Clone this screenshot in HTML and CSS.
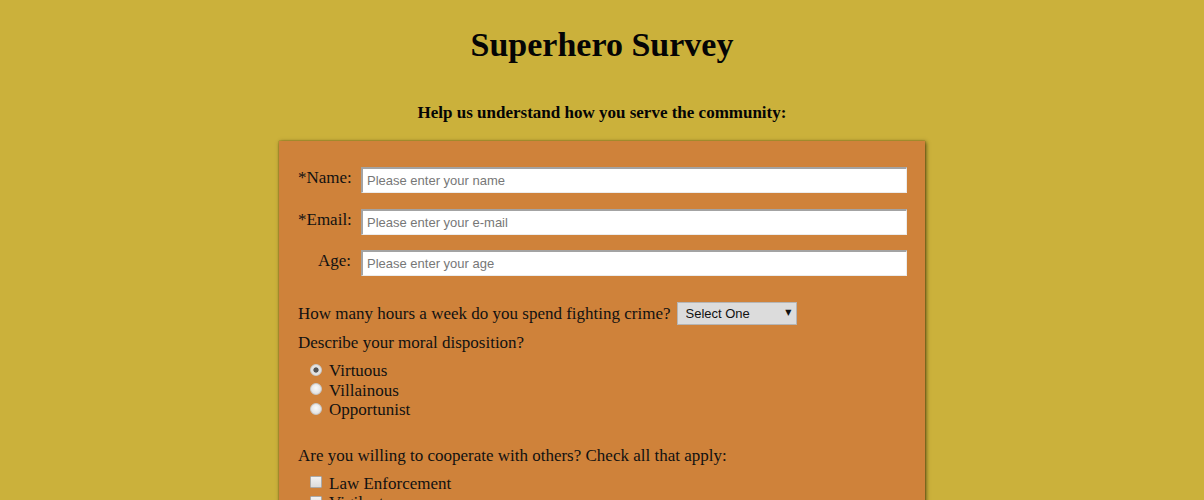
FILE: index.html
```html
<!DOCTYPE html>
<html lang="en">
<head>
<meta charset="utf-8">
<title>Superhero Survey</title>
<link rel="stylesheet" href="styles.css">
</head>
<body>
<h1 class="title">Superhero Survey</h1>
<p class="subtitle">Help us understand how you serve the community:</p>
<form class="survey">
  <div class="fields">
    <label class="field-label" for="name">*Name:</label>
    <input class="text-input" id="name" type="text" placeholder="Please enter your name">
    <label class="field-label" for="email">*Email:</label>
    <input class="text-input" id="email" type="email" placeholder="Please enter your e-mail">
    <label class="field-label" for="age">Age:</label>
    <input class="text-input" id="age" type="text" placeholder="Please enter your age">
  </div>
  <div class="q-hours">
    <span>How many hours a week do you spend fighting crime?</span>
    <span class="select-wrap">
      <select class="select">
        <option>Select One</option>
        <option>0-10</option>
        <option>10-20</option>
        <option>20+</option>
      </select>
      <span class="select-arrow">▼</span>
    </span>
  </div>
  <div class="question">Describe your moral disposition?</div>
  <div class="options">
    <label class="option"><input class="radio" type="radio" name="moral" checked> Virtuous</label>
    <label class="option"><input class="radio" type="radio" name="moral"> Villainous</label>
    <label class="option"><input class="radio" type="radio" name="moral"> Opportunist</label>
  </div>
  <div class="question q-coop">Are you willing to cooperate with others? Check all that apply:</div>
  <div class="options">
    <label class="option"><input class="check" type="checkbox"> Law Enforcement</label>
    <label class="option"><input class="check" type="checkbox"> Vigilantes</label>
    <label class="option"><input class="check" type="checkbox"> Other Superheroes</label>
  </div>
</form>
</body>
</html>
```
FILE: styles.css
```css
html, body {
  margin: 0;
  padding: 0;
}
body {
  background: #cbb13b;
  font-family: "Liberation Serif", "Times New Roman", serif;
  color: #111;
  padding-top: 25px;
}
.title {
  margin: 0;
  text-align: center;
  font-size: 34px;
  line-height: 40px;
  font-weight: bold;
  color: #050505;
}
.subtitle {
  margin: 37px 0 0;
  text-align: center;
  font-size: 17px;
  line-height: 22px;
  font-weight: bold;
  color: #050505;
}
.survey {
  width: 646px;
  box-sizing: border-box;
  margin: 17px auto 0;
  padding: 26px 18px 40px 19px;
  background: #cf823a;
  box-shadow: 0 0 1px rgba(60, 40, 0, 0.6), 1px 1px 4px rgba(40, 30, 0, 0.75);
  font-size: 17px;
}
.fields {
  display: grid;
  grid-template-columns: 53px 1fr;
  column-gap: 10px;
  row-gap: 15.5px;
  align-items: center;
}
.field-label {
  text-align: right;
  white-space: nowrap;
  line-height: 20px;
  position: relative;
  top: -2px;
}
.text-input {
  height: 26px;
  box-sizing: border-box;
  margin: 0;
  padding: 0 4px;
  background: #fff;
  border-top: 2px solid #a3a3a3;
  border-left: 2px solid #a3a3a3;
  border-right: 1px solid #ececec;
  border-bottom: 1px solid #ececec;
  font-family: "Liberation Sans", Arial, sans-serif;
  font-size: 13px;
  color: #222;
  outline: none;
}
.text-input::placeholder {
  color: #777;
}
.q-hours {
  display: flex;
  align-items: center;
  height: 23px;
  margin-top: 26px;
  line-height: 20px;
}
.select-wrap {
  position: relative;
  display: inline-block;
  margin-left: 6px;
}
.select {
  appearance: none;
  -webkit-appearance: none;
  width: 120px;
  height: 23px;
  margin: 0;
  padding: 0 20px 0 8px;
  background: #dcdcdc;
  border: 1px solid #b5b5b5;
  border-radius: 0;
  font-family: "Liberation Sans", Arial, sans-serif;
  font-size: 13px;
  color: #111;
  display: block;
}
.select-arrow {
  position: absolute;
  right: 5px;
  top: 5px;
  font-family: "DejaVu Sans", sans-serif;
  font-size: 8px;
  line-height: 12px;
  color: #111;
  pointer-events: none;
}
.question {
  margin-top: 8px;
  line-height: 20px;
}
.q-coop {
  margin-top: 26px;
}
.options {
  margin-top: 8px;
  padding-left: 12px;
  display: flex;
  flex-direction: column;
}
.option {
  line-height: 19.5px;
  display: flex;
  align-items: center;
  gap: 7px;
}
.radio {
  appearance: none;
  -webkit-appearance: none;
  width: 12px;
  height: 12px;
  margin: 0;
  border-radius: 50%;
  border: 1px solid #c8c8c8;
  background: radial-gradient(circle at 50% 40%, #fafafa 0%, #e2e2e2 70%, #d6d6d6 100%);
  box-sizing: border-box;
  position: relative;
  top: -1px;
}
.radio:checked {
  background: radial-gradient(circle, #555 0, #555 2.2px, #e0e0e0 3px, #ececec 100%);
}
.check {
  appearance: none;
  -webkit-appearance: none;
  width: 12px;
  height: 12px;
  margin: 0;
  border: 1px solid #aaa;
  border-radius: 1px;
  background: linear-gradient(#f2f2f2, #dcdcdc);
  box-sizing: border-box;
  position: relative;
  top: -1px;
}
```
